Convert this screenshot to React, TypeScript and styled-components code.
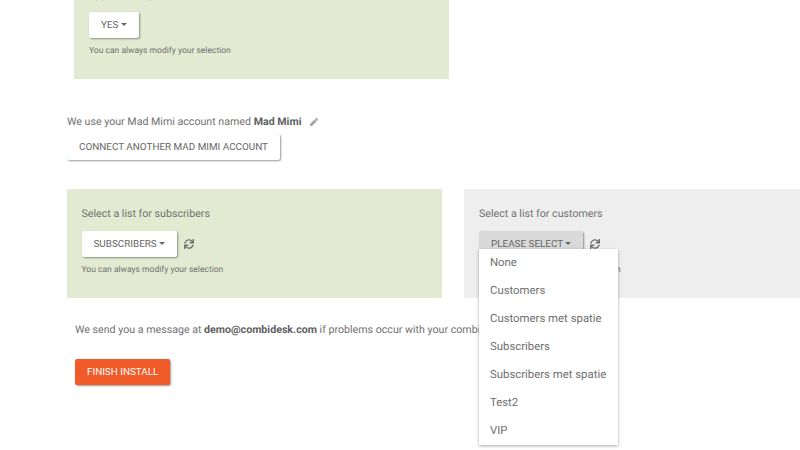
import React from "react";
import styled, { createGlobalStyle } from "styled-components";
import { FaSync, FaPen } from "react-icons/fa";

const GlobalStyle = createGlobalStyle`
  html, body {
    margin: 0;
    height: 100%;
    overflow: hidden;
    background: #fff;
  }
  body {
    font-family: Roboto, "Liberation Sans", sans-serif;
    color: #707070;
    text-rendering: geometricPrecision;
  }
`;

const lists = [
  "None",
  "Customers",
  "Customers met spatie",
  "Subscribers",
  "Subscribers met spatie",
  "Test2",
  "VIP",
];

const App = () => {
  return (
    <Page>
      <GlobalStyle />
      <TopPanel>
        <Label>Synchronize your contacts</Label>
        <Controls>
          <Button>
            YES <Caret />
          </Button>
        </Controls>
        <Helper>You can always modify your selection</Helper>
      </TopPanel>

      <AccountLine>
        We use your Mad Mimi account named <strong>Mad Mimi</strong>
        <EditIcon />
      </AccountLine>
      <AccountButton>CONNECT ANOTHER MAD MIMI ACCOUNT</AccountButton>

      <PanelRow>
        <Panel $color="#e2ebd1">
          <Label>Select a list for subscribers</Label>
          <Controls>
            <Button>
              SUBSCRIBERS <Caret />
            </Button>
            <Refresh />
          </Controls>
          <Helper>You can always modify your selection</Helper>
        </Panel>
        <Panel $color="#eeeeee">
          <Label>Select a list for customers</Label>
          <Controls>
            <SelectWrap>
              <Button $open>
                PLEASE SELECT <Caret />
              </Button>
              <Menu>
                {lists.map((item) => (
                  <MenuItem key={item}>{item}</MenuItem>
                ))}
              </Menu>
            </SelectWrap>
            <Refresh />
          </Controls>
          <Helper>You can always modify your selection</Helper>
        </Panel>
      </PanelRow>

      <Message>
        We send you a message at <strong>demo@combidesk.com</strong> if problems occur with your
        combination
      </Message>
      <FinishButton>FINISH INSTALL</FinishButton>
    </Page>
  );
};

export default App;

const Page = styled.div`
  display: flex;
  flex-direction: column;
  align-items: flex-start;
  width: 800px;
  height: 480px;
  margin-top: -30px;
  overflow: hidden;
`;

const Panel = styled.div<{ $color: string }>`
  flex: none;
  box-sizing: border-box;
  width: 375px;
  height: 109px;
  padding: 15px;
  background: ${(p) => p.$color};
`;

const TopPanel = styled(Panel).attrs({ $color: "#e2ebd1" })`
  margin-left: 74px;
`;

const Label = styled.div`
  font-size: 10.65px;
  line-height: 20px;
`;

const Controls = styled.div`
  display: flex;
  align-items: center;
  gap: 7px;
  margin-top: 7px;
`;

const Button = styled.button<{ $open?: boolean }>`
  display: inline-flex;
  align-items: center;
  height: 26px;
  padding: 0 12px 2px;
  border: 0;
  border-radius: 2px;
  background: ${(p) => (p.$open ? "#d9d9d9" : "#fff")};
  box-shadow: 1px 1px 2px rgba(0, 0, 0, 0.4);
  font-family: inherit;
  font-size: 9.9px;
  color: #666;
  white-space: pre;
`;

const Caret = styled.span`
  width: 0;
  height: 0;
  border-top: 3px solid #666;
  border-left: 3px solid transparent;
  border-right: 3px solid transparent;
`;

const Refresh = styled(FaSync)`
  width: 10px;
  height: 10px;
  color: #707070;
`;

const Helper = styled.div`
  margin-top: 6px;
  font-size: 8.52px;
  line-height: 14px;
`;

const AccountLine = styled.div`
  display: flex;
  align-items: center;
  margin: 34px 0 0 67px;
  font-size: 10.65px;
  line-height: 18px;
  white-space: pre;

  strong {
    font-weight: 700;
    color: #5f5f5f;
  }
`;

const EditIcon = styled(FaPen)`
  width: 8px;
  height: 8px;
  margin-left: 9px;
  color: #a0a0a0;
`;

const AccountButton = styled(Button)`
  margin: 3px 0 0 67px;
`;

const PanelRow = styled.div`
  display: flex;
  gap: 22.5px;
  margin: 29px 0 0 66.5px;
`;

const SelectWrap = styled.div`
  position: relative;
  display: flex;
`;

const Menu = styled.ul`
  position: absolute;
  top: 18px;
  left: 0;
  z-index: 2;
  width: 139px;
  margin: 0;
  padding: 0;
  list-style: none;
  background: #fff;
  box-shadow: 0 1px 3px rgba(0, 0, 0, 0.35);
`;

const MenuItem = styled.li`
  height: 28px;
  padding: 0 11px;
  font-size: 11.36px;
  line-height: 27px;
  white-space: nowrap;
`;

const Message = styled.div`
  margin: 23px 0 0 75px;
  font-size: 10.65px;
  line-height: 18px;

  strong {
    font-weight: 700;
    color: #5f5f5f;
  }
`;

const FinishButton = styled(Button)`
  margin: 20px 0 0 75px;
  background: #f15a29;
  color: #fff;
`;
